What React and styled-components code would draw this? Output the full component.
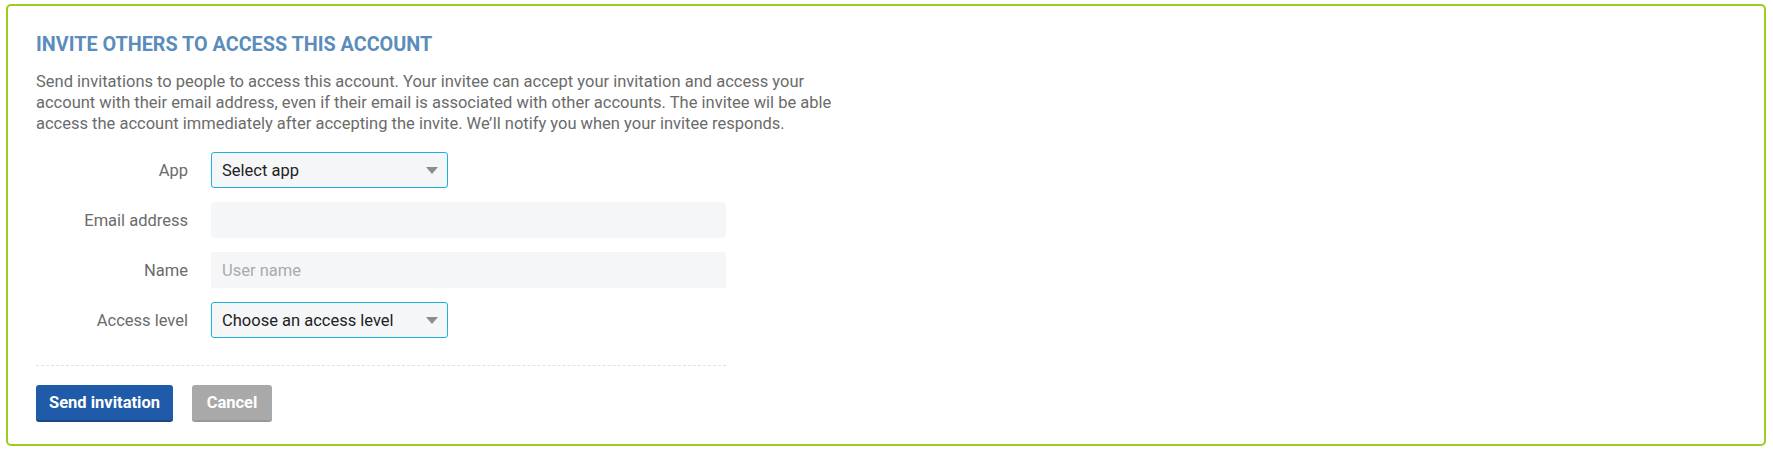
import React from 'react';
import styled, { createGlobalStyle } from 'styled-components';

const GlobalStyle = createGlobalStyle`
  html, body {
    margin: 0;
    padding: 0;
    background: #ffffff;
  }
  body {
    font-family: Roboto, "Liberation Sans", Arial, sans-serif;
  }
`;

const Page = styled.div`
  padding: 4px 7px 8px 6px;
`;

const Card = styled.section`
  border: 2px solid #9acd22;
  border-radius: 5px;
  padding: 27px 28px 22px 28px;
  min-height: 442px;
  box-sizing: border-box;
`;

const Title = styled.h2`
  margin: 0 0 14px 0;
  font-size: 19.8px;
  line-height: 24px;
  font-weight: 700;
  color: #5a8dbb;
  text-transform: uppercase;
`;

const Intro = styled.p`
  margin: 0 0 18px 0;
  max-width: 820px;
  font-size: 16.5px;
  line-height: 21px;
  color: #6b6b6b;
`;

const Form = styled.form`
  width: 690px;
`;

const Row = styled.div`
  display: grid;
  grid-template-columns: 152px 1fr;
  column-gap: 23px;
  align-items: center;
  margin-bottom: 14px;

  &:last-child {
    margin-bottom: 0;
  }
`;

const Label = styled.label`
  text-align: right;
  font-size: 16.5px;
  color: #6b6b6b;
`;

const fieldBase = `
  box-sizing: border-box;
  height: 36px;
  border-radius: 3px;
  background: #f5f6f8;
  font-family: Roboto, "Liberation Sans", Arial, sans-serif;
  font-size: 16.5px;
`;

const SelectBox = styled.div`
  ${fieldBase}
  width: 237px;
  border: 1px solid #1fb0dd;
  display: flex;
  align-items: center;
  justify-content: space-between;
  padding: 0 9px 0 10px;
  color: #222;
`;

const Arrow = styled.span`
  width: 0;
  height: 0;
  border-left: 6px solid transparent;
  border-right: 6px solid transparent;
  border-top: 7px solid #8a8e94;
`;

const TextInput = styled.input`
  ${fieldBase}
  width: 515px;
  border: none;
  padding: 0 11px;
  color: #222;
  outline: none;

  &::placeholder {
    color: #a9abae;
  }
`;

const Divider = styled.hr`
  border: none;
  border-top: 1px dashed #e2e2e2;
  margin: 27px 0 19px 0;
  width: 690px;
`;

const Actions = styled.div`
  display: flex;
  gap: 19px;
`;

const Button = styled.button`
  box-sizing: border-box;
  height: 37px;
  width: ${(p) => p.$w}px;
  padding: 0;
  border: none;
  border-radius: 3px;
  border-bottom: 2px solid ${(p) => p.$shade};
  background: ${(p) => p.$bg};
  color: #ffffff;
  font-family: Roboto, "Liberation Sans", Arial, sans-serif;
  font-size: 16.5px;
  font-weight: 700;
  cursor: pointer;
`;

const Select = ({ text }) => (
  <SelectBox>
    <span>{text}</span>
    <Arrow />
  </SelectBox>
);

export default function App() {
  return (
    <Page>
      <GlobalStyle />
      <Card>
        <Title>Invite others to access this account</Title>
        <Intro>
          Send invitations to people to access this account. Your invitee can
          accept your invitation and access your account with their email
          address, even if their email is associated with other accounts. The
          invitee wil be able access the account immediately after accepting
          the invite. We’ll notify you when your invitee responds.
        </Intro>
        <Form>
          <Row>
            <Label>App</Label>
            <Select text="Select app" />
          </Row>
          <Row>
            <Label>Email address</Label>
            <TextInput type="text" />
          </Row>
          <Row>
            <Label>Name</Label>
            <TextInput type="text" placeholder="User name" />
          </Row>
          <Row>
            <Label>Access level</Label>
            <Select text="Choose an access level" />
          </Row>
        </Form>
        <Divider />
        <Actions>
          <Button $bg="#1f5ba9" $shade="#1b4784" $w={137}>
            Send invitation
          </Button>
          <Button $bg="#a9a9a9" $shade="#999999" $w={80}>
            Cancel
          </Button>
        </Actions>
      </Card>
    </Page>
  );
}
